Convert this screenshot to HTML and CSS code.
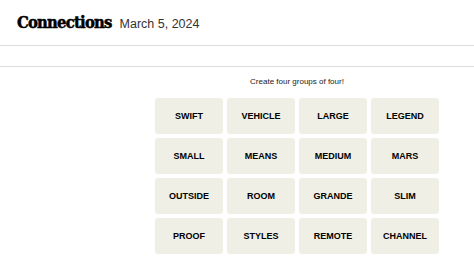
FILE: index.html
```html
<!DOCTYPE html>
<html lang="en">
<head>
    <meta charset="UTF-8">
    <title>Connections - March 5, 2024</title>
    <link rel="stylesheet" href="styles.css">
</head>
<body>

<header class="top">
    <h1>Connections</h1>
    <span class="date">March 5, 2024</span>
</header>
<nav class="toolbar"></nav>

<main class="game">
    <p class="hint">Create four groups of four!</p>
    <div class="board">
        <button class="tile">SWIFT</button>
        <button class="tile">VEHICLE</button>
        <button class="tile">LARGE</button>
        <button class="tile">LEGEND</button>
        <button class="tile">SMALL</button>
        <button class="tile">MEANS</button>
        <button class="tile">MEDIUM</button>
        <button class="tile">MARS</button>
        <button class="tile">OUTSIDE</button>
        <button class="tile">ROOM</button>
        <button class="tile">GRANDE</button>
        <button class="tile">SLIM</button>
        <button class="tile">PROOF</button>
        <button class="tile">STYLES</button>
        <button class="tile">REMOTE</button>
        <button class="tile">CHANNEL</button>
    </div>
</main>

</body>
</html>
```

FILE: styles.css
```css
body {
    margin: 0;
    font-family: "Liberation Sans", Arial, sans-serif;
    background: white;
    color: #000;
}
.top {
    height: 46px;
    border-bottom: 1px solid #dcdcdc;
    display: flex;
    align-items: center;
    padding: 0 17px;
    gap: 8px;
    box-sizing: border-box;
}
.top h1 {
    margin: 0;
    font-family: "DejaVu Serif Condensed", "DejaVu Serif", serif;
    font-stretch: condensed;
    font-weight: bold;
    font-size: 16.5px;
    letter-spacing: -0.8px;
    -webkit-text-stroke: 0.5px #000;
}
.date {
    font-size: 12.5px;
    color: #333;
    margin-top: 2px;
}
.toolbar {
    height: 20px;
    border-bottom: 1px solid #dcdcdc;
}
.game {
    width: 284px;
    margin-left: 155px;
}
.hint {
    margin: 10px 0 11px;
    font-size: 8px;
    line-height: 10px;
    text-align: center;
    color: #222;
}
.board {
    display: grid;
    grid-template-columns: repeat(4, 68px);
    grid-auto-rows: 36px;
    gap: 4px;
}
.tile {
    border: none;
    border-radius: 3px;
    background: #efefe6;
    font-family: "Liberation Sans", Arial, sans-serif;
    font-weight: bold;
    font-size: 9px;
    color: #000;
    padding: 0;
}
```
